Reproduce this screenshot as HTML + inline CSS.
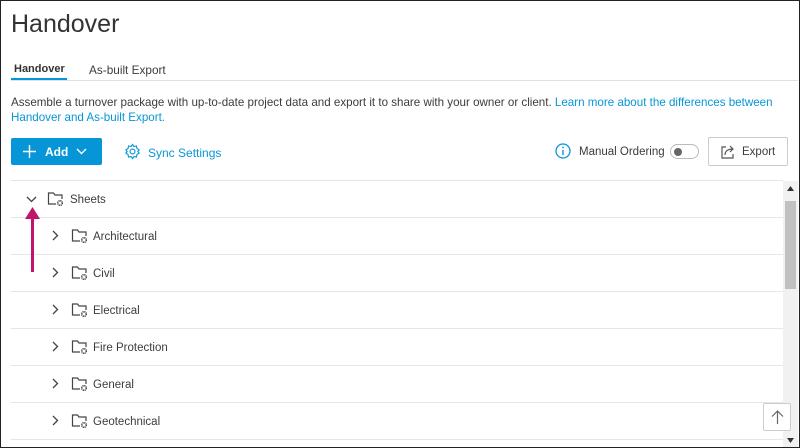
<!DOCTYPE html>
<html><head><style>
*{margin:0;padding:0;box-sizing:border-box}
body{width:800px;height:448px;overflow:hidden;background:#fff;font-family:"Liberation Sans",sans-serif;color:#3c3c3c;position:relative}
.frame{position:absolute;left:0;top:0;width:800px;height:448px;border:1px solid #222;pointer-events:none;z-index:10}
.a{position:absolute;white-space:nowrap}
.row{position:absolute;left:11px;width:772px;height:1px;background:#e6e6e6}
.lbl{position:absolute;font-size:11.5px;color:#3c3c3c}
</style></head><body>
<div class="frame"></div>
<div class="a" style="left:11px;top:10px;font-size:25px;color:#333">Handover</div>
<div class="a" style="left:14px;top:63px;font-size:11px;font-weight:bold;color:#333">Handover</div>
<div class="a" style="left:89px;top:63px;font-size:11.8px;color:#3c3c3c">As-built Export</div>
<div class="a" style="left:11px;top:78px;width:56px;height:2px;background:#0696d7"></div>
<div class="a" style="left:11px;top:80px;width:787px;height:1px;background:#e0e0e0"></div>
<div class="a" style="left:11px;top:96px;font-size:11.6px;color:#3c3c3c">Assemble a turnover package with up-to-date project data and export it to share with your owner or client. <span style="color:#0696d7">Learn more about the differences between</span></div>
<div class="a" style="left:11px;top:111px;font-size:11.6px;color:#0696d7">Handover and As-built Export.</div>
<div class="a" style="left:11px;top:138px;width:91px;height:27px;background:#0696d7;border-radius:2px;color:#fff;font-size:12px;font-weight:bold">
<svg style="position:absolute;left:12px;top:7px" width="13" height="13"><path d="M6.5 0v13M0 6.5h13" stroke="#fff" stroke-width="1.4"/></svg>
<span style="position:absolute;left:34px;top:7px">Add</span>
<svg style="position:absolute;left:65px;top:10px" width="11" height="7"><path d="M1 1l4.5 4.5L10 1" stroke="#fff" stroke-width="1.4" fill="none"/></svg></div>
<svg class="a" style="left:124px;top:143px" width="17" height="17" viewBox="0 0 24 24"><path d="M12 2l2 3 3.5-.8.8 3.5 3 2-1.8 2.3 1.8 2.3-3 2-.8 3.5-3.5-.8-2 3-2-3-3.5.8-.8-3.5-3-2 1.8-2.3L2.7 9.7l3-2 .8-3.5L10 5z" fill="none" stroke="#0696d7" stroke-width="1.6"/><circle cx="12" cy="12" r="3.5" fill="none" stroke="#0696d7" stroke-width="1.6"/></svg>
<div class="a" style="left:148px;top:146px;font-size:12px;color:#0696d7">Sync Settings</div>
<svg class="a" style="left:555px;top:143px" width="16" height="16"><circle cx="8" cy="8" r="7" fill="none" stroke="#0696d7" stroke-width="1.3"/><path d="M8 7v5" stroke="#0696d7" stroke-width="1.4"/><circle cx="8" cy="4.5" r=".9" fill="#0696d7"/></svg>
<div class="a" style="left:579px;top:146px;font-size:11.5px;color:#3c3c3c">Manual Ordering</div>
<div class="a" style="left:670px;top:144px;width:29px;height:15px;border:1px solid #bbb;border-radius:8px"><div style="position:absolute;left:3px;top:3px;width:8px;height:8px;border-radius:50%;background:#666"></div></div>
<div class="a" style="left:708px;top:137px;width:80px;height:29px;border:1px solid #ccc;border-radius:2px">
<svg style="position:absolute;left:11px;top:6px" width="16" height="16"><path d="M6 3H2v11h11v-4" fill="none" stroke="#555" stroke-width="1.2"/><path d="M5 11c0-4 3-6 8-6M10 2l3 3-3 3" fill="none" stroke="#555" stroke-width="1.2"/></svg>
<span style="position:absolute;left:33px;top:8px;font-size:11.5px;color:#3c3c3c">Export</span></div>
<div class="row" style="top:180px"></div>
<div class="row" style="top:217px"></div>
<div class="row" style="top:254px"></div>
<div class="row" style="top:291px"></div>
<div class="row" style="top:328px"></div>
<div class="row" style="top:365px"></div>
<div class="row" style="top:402px"></div>
<div class="row" style="top:439px"></div>
<svg class="a" style="left:26px;top:196px" width="11" height="7"><path d="M1 1l4.5 4.5L10 1" stroke="#444" stroke-width="1.3" fill="none"/></svg>
<svg class="a" style="left:47px;top:191px" width="18" height="16"><path d="M9 13H1.5V2h5l1.5 2h7v4" fill="none" stroke="#444" stroke-width="1.2"/><circle cx="13" cy="12" r="2.3" fill="none" stroke="#444" stroke-width="1.5" stroke-dasharray="1.2 .6"/></svg>
<div class="lbl" style="left:70px;top:194px">Sheets</div>
<div class="a" style="left:31px;top:216px;width:3px;height:56px;background:#c0156b"></div>
<svg class="a" style="left:25px;top:207px" width="15" height="12"><path d="M7.5 0L15 12H0z" fill="#c0156b"/></svg>
<div id="kids"></div>
<script>
var n=["Architectural","Civil","Electrical","Fire Protection","General","Geotechnical"],h="";
n.forEach(function(s,i){var y=229+i*37;
h+='<svg class="a" style="left:52px;top:'+(y+1)+'px" width="7" height="11"><path d="M1 1l4.5 4.5L1 10" stroke="#444" stroke-width="1.3" fill="none"/></svg>'+
'<svg class="a" style="left:71px;top:'+(y-1)+'px" width="18" height="16"><path d="M9 13H1.5V2h5l1.5 2h7v4" fill="none" stroke="#444" stroke-width="1.2"/><circle cx="13" cy="12" r="2.3" fill="none" stroke="#444" stroke-width="1.5" stroke-dasharray="1.2 .6"/></svg>'+
'<div class="lbl" style="left:93px;top:'+(y+2)+'px">'+s+'</div>';});
document.getElementById("kids").innerHTML=h;
</script>
<div class="a" style="left:783px;top:181px;width:15px;height:266px;background:#f1f1f1"></div>
<svg class="a" style="left:787px;top:186px" width="7" height="5"><path d="M0 5L3.5 0 7 5z" fill="#333"/></svg>
<svg class="a" style="left:787px;top:438px" width="7" height="5"><path d="M0 0L3.5 5 7 0z" fill="#333"/></svg>
<div class="a" style="left:785px;top:201px;width:11px;height:88px;background:#c1c1c1"></div>
<div class="a" style="left:763px;top:403px;width:28px;height:28px;background:#fff;border:1px solid #ccc;border-radius:2px">
<svg style="position:absolute;left:7px;top:6px" width="13" height="15"><path d="M6.5 1v13M1 6.5L6.5 1 12 6.5" fill="none" stroke="#666" stroke-width="1.2"/></svg></div>
</body></html>
